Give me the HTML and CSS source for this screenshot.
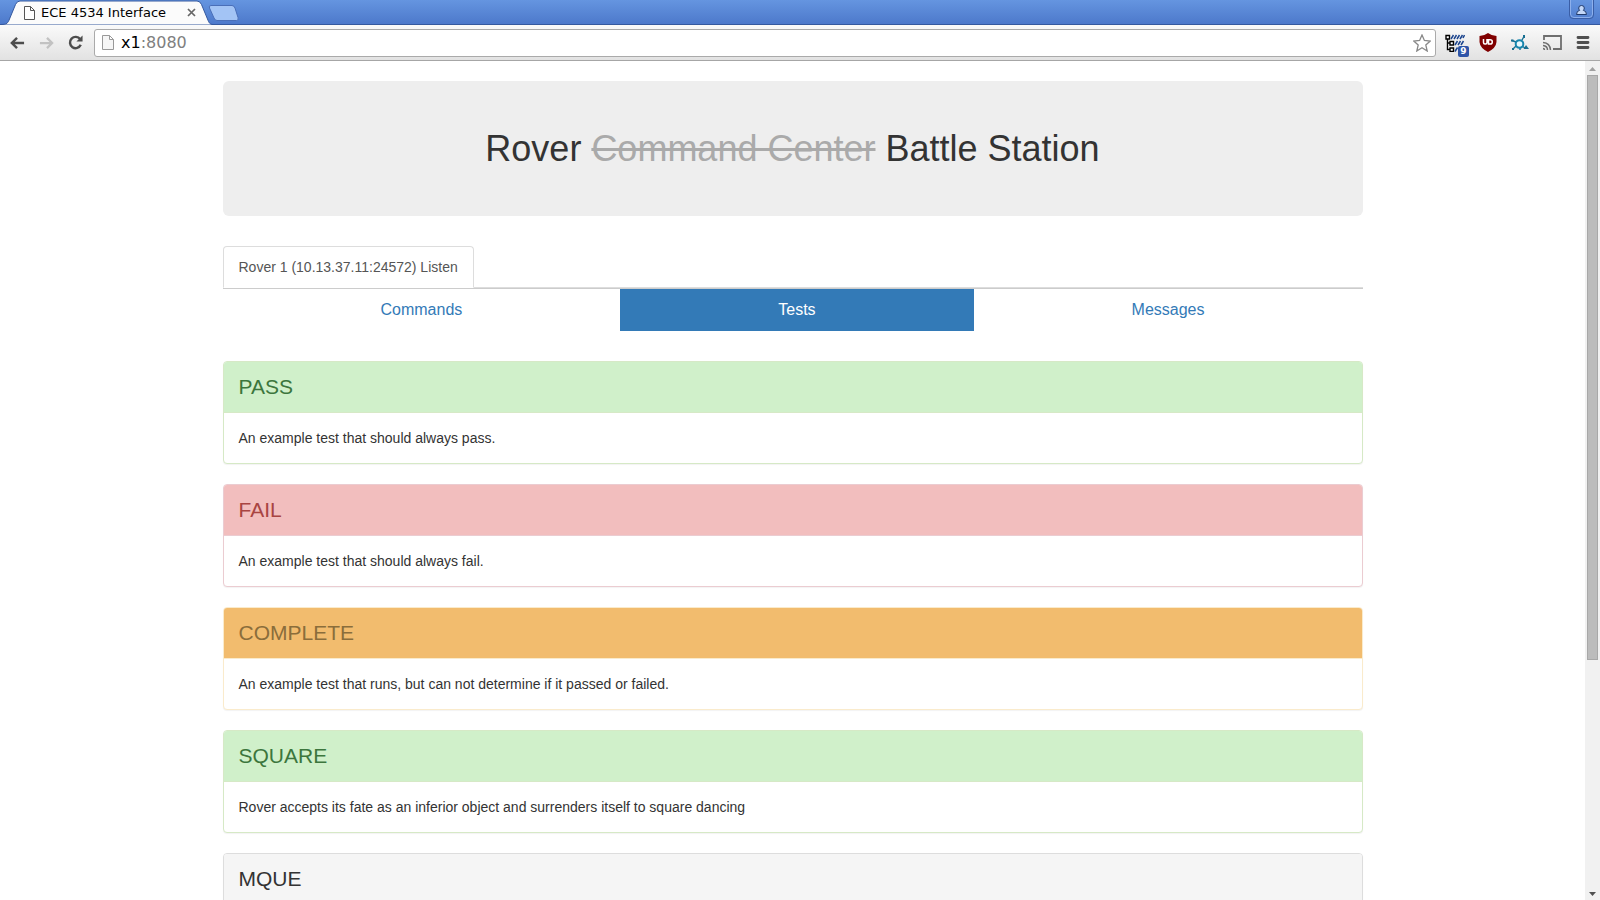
FILE: index.html
```html
<!DOCTYPE html>
<html lang="en">
<head>
<meta charset="utf-8">
<title>ECE 4534 Interface</title>
<link rel="stylesheet" href="styles.css">
</head>
<body>
<div class="browser">
  <header class="titlebar">
    <div class="browser-tab">
      <svg class="tab-shape" viewBox="0 0 212 25" width="212" height="25" aria-hidden="true">
        <path d="M0 25 V24.500 C6 24.500 7 23 8.500 19 L14.500 4.500 Q16 1 19 1 H196 Q199 1 200.500 4.500 L206.500 19 C208 23 209 24.500 212 24.500 V25 Z" fill="#fbfbfb" stroke="#35599f"/>
      </svg>
      <svg class="tab-icon" viewBox="0 0 11 14" width="11" height="14" aria-hidden="true">
        <path d="M.5.500H6.500L10.500 4.500V13.500H.5ZM6.500.500V4.500H10.500" fill="#fff" stroke="#555"/>
      </svg>
      <span class="tab-title">ECE 4534 Interface</span>
      <button class="tab-close" aria-label="Close tab">
        <svg viewBox="0 0 9 9" width="9" height="9"><path d="M1 1 8 8M8 1 1 8" stroke="#666" stroke-width="1.700"/></svg>
      </button>
    </div>
    <button class="new-tab" aria-label="New tab">
      <svg viewBox="0 0 32 16" width="32" height="16"><path d="M3 .5H24Q26 .5 27 3L30 12.500Q31 15.500 28.500 15.500H9Q7 15.500 6 13L1.500 3Q.5.500 3 .5Z" fill="#a3c4f5" stroke="#4a6fb8"/></svg>
    </button>
    <button class="profile" aria-label="Profile">
      <svg viewBox="0 0 25 19" width="25" height="19"><path d="M1.500 0V14Q1.500 17.500 5 17.500H20Q23.500 17.500 23.500 14V0" fill="none" stroke="#8db0ec"/><path d="M.5 0V15Q.5 18.500 4 18.500H21Q24.500 18.500 24.500 15V0" fill="none" stroke="#3a5ea6"/><path d="M9.700 8Q9.700 5.500 12.500 5.500T15.300 8Q15.300 9.500 14.300 10.300Q17.500 10.800 17.500 14.500H7.500Q7.500 10.800 10.700 10.300Q9.700 9.500 9.700 8Z" fill="#c3d7f8" stroke="#203a6c"/></svg>
    </button>
  </header>
  <div class="toolbar">
    <button class="tool" aria-label="Back"><svg viewBox="0 0 16 14" width="15" height="14"><path d="M7.500 1.500 2 7 7.500 12.500M2 7H15" fill="none" stroke="#4d4d4d" stroke-width="2.600"/></svg></button>
    <button class="tool" aria-label="Forward" disabled><svg viewBox="0 0 16 14" width="15" height="14"><path d="M8.500 1.500 14 7 8.500 12.500M14 7H1" fill="none" stroke="#c2c2c2" stroke-width="2.400"/></svg></button>
    <button class="tool" aria-label="Reload"><svg viewBox="0 0 16 16" width="15" height="15"><path d="M13 4.500A6 6 0 1 0 13.600 10.500" fill="none" stroke="#4d4d4d" stroke-width="2.600"/><path d="M15.500.500V7H9Z" fill="#4d4d4d"/></svg></button>
    <div class="address">
      <svg viewBox="0 0 12 15" width="12" height="15" aria-hidden="true"><path d="M.5.500H7.500L11.500 4.500V14.500H.5ZM7.500.500V4.500H11.500" fill="#f6f6f6" stroke="#999"/></svg>
      <a class="url" href="#">x1<span class="port">:8080</span></a>
      <button class="star" aria-label="Bookmark"><svg viewBox="0 0 18 18" width="18" height="18"><path d="M9 1 11.400 6.500 17.200 7 12.800 11 14.200 17 9 13.800 3.800 17 5.200 11 .8 7 6.600 6.500Z" fill="#fff" stroke="#888" stroke-width="1.300"/></svg></button>
    </div>
    <button class="tool extension" aria-label="Tree extension">
      <svg viewBox="0 0 20 18" width="20" height="18"><path d="M1 1.500H4.500V5H1ZM2.500 5V15.500H5M2.500 9H5M5 7.500H8.500V11H5ZM5 14H8.500V17.500H5Z" fill="#fff" stroke="#000" stroke-width="1.400"/><path d="M6 5 8.500 1M9 5 11.500 1M12 5 14.500 1M15 5 17.500 1M18 4 19.500 1M10 11 12.500 7M13 11 15.500 7M16 11 18.500 7M10 17.500 12.500 13.500" stroke="#1c458e" stroke-width="1.500"/></svg>
      <span class="count">9</span>
    </button>
    <button class="tool" aria-label="uBlock"><svg viewBox="0 0 18 19" width="18" height="19"><path d="M9 0Q13 3 17.500 3V9Q17 15 9 19Q1 15 .5 9V3Q5 3 9 0Z" fill="#800000"/><path d="M4.500 6V9.500Q4.500 11 6 11H6.500Q8 11 8 9.500V6M9.500 11V6.800H11Q13.300 6.800 13.300 8.900T11 11Z" fill="none" stroke="#fff" stroke-width="1.500"/></svg></button>
    <button class="tool" aria-label="Network extension"><svg viewBox="0 0 18 16" width="18" height="16"><path d="M11 5 13 1.500M5 7 1 5.500M5 11 2 14M11 11 14 13M9 13V15" stroke="#176f91" stroke-width="1.400"/><circle cx="8.500" cy="9" r="3.800" fill="#e6f8fd" stroke="#1685ad" stroke-width="2"/><path d="M12.500 14 15 10 18 14ZM12 0H14V3H12ZM0 4.500H2.500V6.500H0ZM1 13H3V15H1Z" fill="#176f91"/></svg></button>
    <button class="tool" aria-label="Cast"><svg viewBox="0 0 19 15" width="19" height="15"><path d="M1 5V1H18V14H10" fill="none" stroke="#6e6e6e" stroke-width="1.800"/><path d="M0 7.500Q7 8 7.500 15M0 10.500Q4.500 11 4.500 15M0 13.500Q1.500 13.500 1.500 15" fill="none" stroke="#6e6e6e" stroke-width="1.500"/></svg></button>
    <button class="tool" aria-label="Menu"><svg viewBox="0 0 14 13" width="14" height="13"><path d="M2 1.500H12M2 6.500H12M2 11.500H12" stroke="#505050" stroke-width="2.800" stroke-linecap="round"/></svg></button>
  </div>
  <div class="viewport">
    <main class="page">
      <div class="container">
        <div class="jumbotron"><h1>Rover <del>Command Center</del> Battle Station</h1></div>
        <nav class="rover-tabs"><a class="rover-tab" href="#">Rover 1 (10.13.37.11:24572) Listen</a></nav>
        <nav class="pills">
          <a href="#">Commands</a>
          <a class="active" href="#">Tests</a>
          <a href="#">Messages</a>
        </nav>
        <section class="panel success"><h2>PASS</h2><p>An example test that should always pass.</p></section>
        <section class="panel danger"><h2>FAIL</h2><p>An example test that should always fail.</p></section>
        <section class="panel warning"><h2>COMPLETE</h2><p>An example test that runs, but can not determine if it passed or failed.</p></section>
        <section class="panel success"><h2>SQUARE</h2><p>Rover accepts its fate as an inferior object and surrenders itself to square dancing</p></section>
        <section class="panel"><h2>MQUE</h2></section>
      </div>
    </main>
    <div class="scrollbar" aria-hidden="true">
      <svg viewBox="0 0 7 4" width="7" height="4"><path d="M0 4 3.500 0 7 4Z" fill="#a0a0a0"/></svg>
      <div class="track"><div class="thumb"></div></div>
      <svg viewBox="0 0 7 4" width="7" height="4"><path d="M0 0H7L3.500 4Z" fill="#505050"/></svg>
    </div>
  </div>
</div>
</body>
</html>
```
FILE: styles.css
```css
* { box-sizing: border-box; }
body {
  margin: 0;
  font: 14px/20px "Liberation Sans", Arial, sans-serif;
  color: #333;
  background: #fff;
}
button { border: 0; padding: 0; background: none; font: inherit; color: inherit; }
svg { display: block; flex: none; }
a { color: #337ab7; text-decoration: none; }
.browser { display: flex; flex-direction: column; height: 100vh; overflow: hidden; }

.titlebar {
  display: flex;
  flex: none;
  height: 25px;
  padding: 0 6px 0 5px;
  background: linear-gradient(#6595e0, #4d79cb);
  border-bottom: 1px solid #35599f;
}
.browser-tab {
  position: relative;
  display: flex;
  align-items: center;
  width: 203px;
  height: 25px;
  padding: 0 12px 0 19px;
  font: 13px/16px "DejaVu Sans", sans-serif;
  color: #000;
}
.tab-shape { position: absolute; left: -4px; top: 0; }
.tab-icon, .tab-title, .tab-close { position: relative; }
.tab-title { flex: 1; margin-left: 6px; white-space: nowrap; }
.new-tab { align-self: flex-start; margin-top: 5px; }
.profile { align-self: flex-start; margin-left: auto; }

.toolbar {
  display: flex;
  flex: none;
  align-items: center;
  gap: 14px;
  height: 36px;
  padding: 0 10px;
  background: linear-gradient(#fafafa, #e2e2e2);
  border-bottom: 1px solid #a6a6a6;
}
.address {
  display: flex;
  flex: 1;
  align-items: center;
  height: 28px;
  margin-right: -5px;
  margin-left: -3px;
  padding: 0 4px 0 7px;
  background: #fff;
  border: 1px solid #aaa;
  border-radius: 3px;
}
.url { flex: 1; margin-left: 7px; font: 16px/20px "DejaVu Sans", sans-serif; color: #000; }
.port { color: #808080; }
.extension { position: relative; }
.count {
  position: absolute;
  right: -4px;
  bottom: -5px;
  width: 11px;
  height: 11px;
  border-radius: 2px;
  background: #2f55a8;
  color: #fff;
  font: bold 9px/11px "DejaVu Sans", sans-serif;
  text-align: center;
}

.viewport { display: flex; flex: 1; min-height: 0; }
.page { flex: 1; overflow: hidden; }
.container { max-width: 1170px; margin: 0 auto; padding: 20px 15px; }
.jumbotron {
  margin-bottom: 30px;
  padding: 48px 60px 47px;
  border-radius: 6px;
  background: #eee;
  text-align: center;
}
h1, h2, p { margin: 0; font-weight: 400; }
h1 { font-size: 36px; line-height: 40px; }
del { color: #aaa; }
.rover-tabs { display: flex; height: 42px; border-bottom: 1px solid #ddd; }
.rover-tab {
  height: 42px;
  padding: 10px 15px;
  border: 1px solid #ddd;
  border-bottom-color: #fff;
  border-radius: 4px 4px 0 0;
  background: #fff;
  color: #555;
}
.pills { display: flex; margin-bottom: 30px; border-top: 1px solid #ccc; font-size: 16px; line-height: 22px; }
.pills a { flex: 1 1 auto; padding: 10px 15px; text-align: center; }
.pills .active { background: #337ab7; color: #fff; }

.panel {
  --line: #ddd;
  margin-bottom: 20px;
  border: 1px solid var(--line);
  border-radius: 4px;
  background: #fff;
  box-shadow: 0 1px 1px rgba(0, 0, 0, .05);
}
.panel h2 {
  padding: 15px;
  border-bottom: 1px solid var(--line);
  border-radius: 3px 3px 0 0;
  background: #f5f5f5;
  font-size: 21px;
  line-height: 20px;
}
.panel p { padding: 15px; }
.success { --line: #d6e9c6; }
.success h2 { background: #d0f0ca; color: #3c763d; }
.danger { --line: #ebccd1; }
.danger h2 { background: #f2bebe; color: #a94442; }
.warning { --line: #faebcc; }
.warning h2 { background: #f2bc6e; color: #8a6d3b; }

.scrollbar {
  display: flex;
  flex: none;
  flex-direction: column;
  align-items: center;
  width: 15px;
  padding: 6px 2px 4px;
  gap: 4px;
  background: #f1f1f1;
}
.track { flex: 1; width: 100%; }
.thumb { height: 72%; border: 1px solid #a8a8a8; background: #bcbcbc; }
```
